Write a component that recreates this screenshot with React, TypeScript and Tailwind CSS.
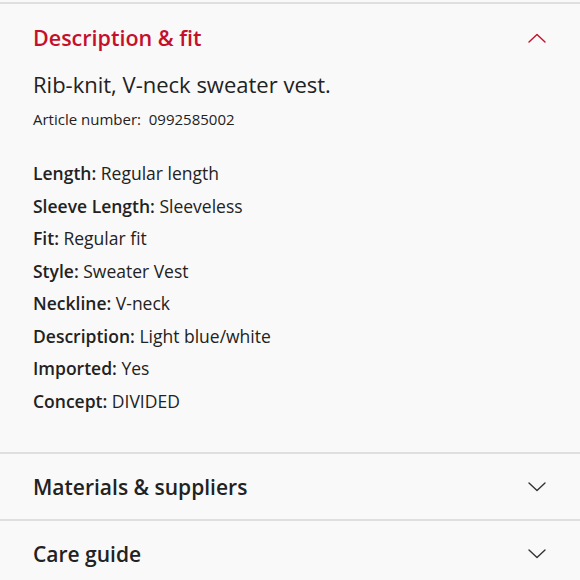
import { ReactNode } from "react";

// ── Chevron ──────────────────────────────────────────────

function Chevron({ up, className }: { up?: boolean; className?: string }) {
    return (
        <svg width="18" height="10" viewBox="0 0 18 10" fill="none" className={className}>
            <path
                d={up ? "M1 9L9 1.5L17 9" : "M1 1L9 8.5L17 1"}
                stroke="currentColor"
                strokeWidth="1.4"
                strokeLinecap="round"
                strokeLinejoin="round"
            />
        </svg>
    );
}

// ── Section header ───────────────────────────────────────

function Header({ title, open, children }: { title: string; open?: boolean; children?: ReactNode }) {
    return (
        <div className="border-b-2 border-[#dfdfdf]">
            <div className="flex items-center justify-between pl-[33px] pr-[34px] h-[65px]">
                <h2
                    className={`text-[21px] font-semibold leading-7 ${open ? "text-[#c4102b]" : "text-[#222]"}`}
                >
                    {title}
                </h2>
                <Chevron up={open} className={open ? "text-[#c4102b]" : "text-[#333]"} />
            </div>
            {children}
        </div>
    );
}

const specs: [string, string][] = [
    ["Length", "Regular length"],
    ["Sleeve Length", "Sleeveless"],
    ["Fit", "Regular fit"],
    ["Style", "Sweater Vest"],
    ["Neckline", "V-neck"],
    ["Description", "Light blue/white"],
    ["Imported", "Yes"],
    ["Concept", "DIVIDED"],
];

export default function App() {
    return (
        <div
            className="w-[580px] h-[580px] overflow-hidden bg-[#faf9f9] text-[#222]"
            style={{ fontFamily: "'Open Sans', Lato, sans-serif" }}
        >
            <div className="mt-[2px] border-t-2 border-[#dfdfdf]">
                {/* Description & fit */}
                <div className="border-b-2 border-[#dfdfdf]">
                    <div className="flex items-center justify-between pl-[33px] pr-[34px] pt-[1px] h-[66px]">
                        <h2 className="text-[21.5px] font-semibold leading-7 text-[#c4102b]">Description &amp; fit</h2>
                        <Chevron up className="text-[#c4102b]" />
                    </div>
                    <div className="pl-[33px] pr-[34px] pb-[35px]">
                        <p className="text-[22px] leading-7">Rib-knit, V-neck sweater vest.</p>
                        <p className="mt-[11px] text-[15px] leading-5 text-[#222]">
                            Article number:&nbsp; 0992585002
                        </p>
                        <ul className="mt-[28px]">
                            {specs.map(([k, v]) => (
                                <li key={k} className="text-[17.5px] leading-[32.5px]">
                                    <span className="font-semibold">{k}:</span> {v}
                                </li>
                            ))}
                        </ul>
                    </div>
                </div>

                <Header title="Materials & suppliers" />
                <Header title="Care guide" />
            </div>
        </div>
    );
}
